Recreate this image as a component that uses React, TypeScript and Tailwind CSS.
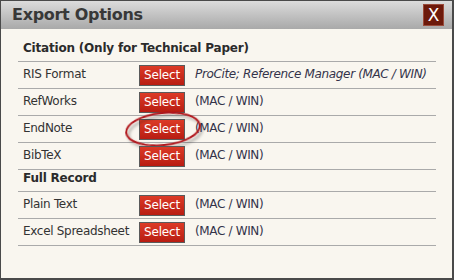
const citation = [
  { label: "RIS Format", note: "ProCite; Reference Manager (MAC / WIN)", italic: true },
  { label: "RefWorks", note: "(MAC / WIN)" },
  { label: "EndNote", note: "(MAC / WIN)", circled: true },
  { label: "BibTeX", note: "(MAC / WIN)" },
];

const fullRecord = [
  { label: "Plain Text", note: "(MAC / WIN)" },
  { label: "Excel Spreadsheet", note: "(MAC / WIN)" },
];

type Row = { label: string; note: string; italic?: boolean; circled?: boolean };

function SelectButton() {
  return (
    <button className="w-[46px] h-[21px] border border-[#5a5a5a] bg-gradient-to-b from-[#dc3a26] to-[#b81c12] text-white text-[12px] leading-none flex items-center justify-center tracking-[-0.2px]">
      Select
    </button>
  );
}

function OptionRow({ row }: { row: Row }) {
  return (
    <div className="relative h-[27px] border-b border-[#aaaaaa] flex items-center">
      <div className="w-[121px] pl-[5px] pb-[3px] tracking-[-0.3px] whitespace-nowrap">{row.label}</div>
      <SelectButton />
      <div className={`pl-[10px] pb-[3px] text-[#33334a] whitespace-nowrap tracking-[-0.35px] ${row.italic ? "italic" : ""}`}>{row.note}</div>
      {row.circled && (
        <svg className="absolute left-[85px] top-[-10px] pointer-events-none" width="110" height="50" viewBox="0 0 110 50">
          <defs>
            <filter id="sh" x="-20%" y="-40%" width="140%" height="180%">
              <feDropShadow dx="2" dy="3" stdDeviation="1.8" floodColor="#000" floodOpacity="0.35" />
            </filter>
          </defs>
          <ellipse cx="60" cy="23" rx="37" ry="16" fill="none" stroke="#b0141a" strokeWidth="2" transform="rotate(-6 60 23)" filter="url(#sh)" />
        </svg>
      )}
    </div>
  );
}

function SectionHeader({ title }: { title: string }) {
  return (
    <div className="h-[22px] border-b border-[#aaaaaa] flex items-end pl-[5px] pb-[4px] font-bold text-[#2b2b2b] tracking-[-0.2px]">
      {title}
    </div>
  );
}

export default function App() {
  return (
    <div className="w-[454px] h-[280px] border-l border-t border-r-2 border-b-2 border-[#4a4a4a] bg-[#f9f6ef] flex flex-col text-[12px] text-[#333333] font-['DejaVu_Sans',Verdana,sans-serif] overflow-hidden">
      <div className="h-[28px] shrink-0 bg-gradient-to-b from-[#dcdcdc] to-[#a9a9a9] flex items-center justify-between pl-[11px] pr-[8px]">
        <span className="text-[16px] font-bold text-[#383838] leading-none tracking-[-0.3px]">Export Options</span>
        <span className="w-[21px] h-[22px] bg-[#6d1a0b] border border-[#9a4a3a] text-white text-[17px] leading-none flex items-center justify-center">
          X
        </span>
      </div>
      <div className="pl-[17px] pr-[16px] pt-[11px]">
        <SectionHeader title="Citation (Only for Technical Paper)" />
        {citation.map((r) => (
          <OptionRow key={r.label} row={r} />
        ))}
        <SectionHeader title="Full Record" />
        {fullRecord.map((r) => (
          <OptionRow key={r.label} row={r} />
        ))}
      </div>
    </div>
  );
}
